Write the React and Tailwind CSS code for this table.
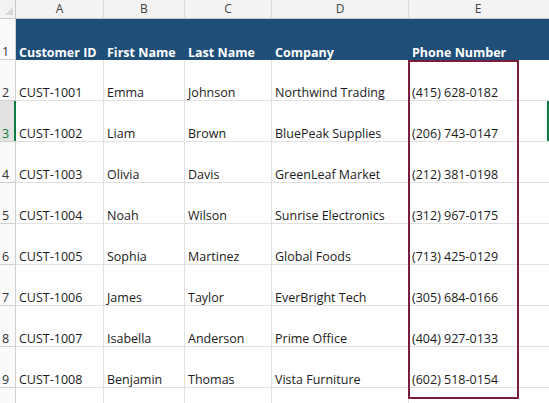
import React from "react";

const rows = [
  ["CUST-1001", "Emma", "Johnson", "Northwind Trading", "(415) 628-0182"],
  ["CUST-1002", "Liam", "Brown", "BluePeak Supplies", "(206) 743-0147"],
  ["CUST-1003", "Olivia", "Davis", "GreenLeaf Market", "(212) 381-0198"],
  ["CUST-1004", "Noah", "Wilson", "Sunrise Electronics", "(312) 967-0175"],
  ["CUST-1005", "Sophia", "Martinez", "Global Foods", "(713) 425-0129"],
  ["CUST-1006", "James", "Taylor", "EverBright Tech", "(305) 684-0166"],
  ["CUST-1007", "Isabella", "Anderson", "Prime Office", "(404) 927-0133"],
  ["CUST-1008", "Benjamin", "Thomas", "Vista Furniture", "(602) 518-0154"],
];

const headers = ["Customer ID", "First Name", "Last Name", "Company", "Phone Number"];
const letters = ["A", "B", "C", "D", "E"];

function Cell({ children, last }) {
  return (
    <div
      className={
        "flex items-end overflow-hidden whitespace-nowrap px-[3px] border-b border-[#e1e1e1] text-[#1b1b1b] " +
        (last ? "" : "border-r")
      }
    >
      <span className="leading-[14px]">{children}</span>
    </div>
  );
}

function RowHead({ n, selected }) {
  return (
    <div
      className={
        "relative flex items-end pl-[2px] border-b border-r border-[#d0d0d0] " +
        (selected ? "bg-[#e2e2e2] text-[#107c41]" : "bg-[#fafafa] text-[#333333]")
      }
    >
      <span className="leading-[14px]">{n}</span>
      {selected && <div className="absolute right-[-1px] top-0 bottom-0 w-[2px] bg-[#107c41]" />}
    </div>
  );
}

export default function App() {
  return (
    <div
      className="relative w-[549px] h-[403px] overflow-hidden bg-white text-[12.5px]"
      style={{ fontFamily: '"Open Sans", "Liberation Sans", sans-serif' }}
    >
      <div className="grid grid-cols-[16px_88px_81px_87px_137px_138px_1fr] grid-rows-[19px_repeat(10,41px)]">
        {/* column letters row */}
        <div className="relative bg-[#f3f3f3] border-b border-r border-[#c8c8c8]">
          <div className="absolute right-[2px] bottom-[3px] w-0 h-0 border-l-[8px] border-l-transparent border-b-[8px] border-b-[#d6d6d6]" />
        </div>
        {letters.map((l, i) => (
          <div
            key={l}
            className={
              "flex items-center justify-center bg-[#f3f3f3] border-b border-[#c8c8c8] text-[#444444] text-[12px] " +
              (i < 4 ? "border-r border-r-[#dcdcdc]" : "")
            }
          >
            {l}
          </div>
        ))}
        <div className="bg-[#f3f3f3] border-b border-[#c8c8c8]" />

        {/* header row */}
        <RowHead n={1} />
        {headers.map((h) => (
          <div
            key={h}
            className="flex items-end px-[3px] bg-[#1f4e79] text-white font-bold whitespace-nowrap"
          >
            <span className="leading-[14px]">{h}</span>
          </div>
        ))}
        <div className="bg-[#1f4e79]" />

        {rows.map((r, idx) => (
          <React.Fragment key={idx}>
            <RowHead n={idx + 2} selected={idx === 1} />
            {r.map((c, j) => (
              <Cell key={j} last={j === 4}>
                {c}
              </Cell>
            ))}
            <div className={"border-b border-[#e1e1e1] " + (idx === 1 ? "bg-[#107c41]" : "")} />
          </React.Fragment>
        ))}

        {/* partial row 10 */}
        <RowHead n={""} />
        <div className="border-r border-[#e1e1e1]" />
        <div className="border-r border-[#e1e1e1]" />
        <div className="border-r border-[#e1e1e1]" />
        <div className="border-r border-[#e1e1e1]" />
        <div />
        <div />
      </div>

      {/* highlight box */}
      <div className="absolute left-[408px] top-[60px] w-[111px] h-[339px] border-2 border-[#7a1d3c] pointer-events-none" />
    </div>
  );
}
